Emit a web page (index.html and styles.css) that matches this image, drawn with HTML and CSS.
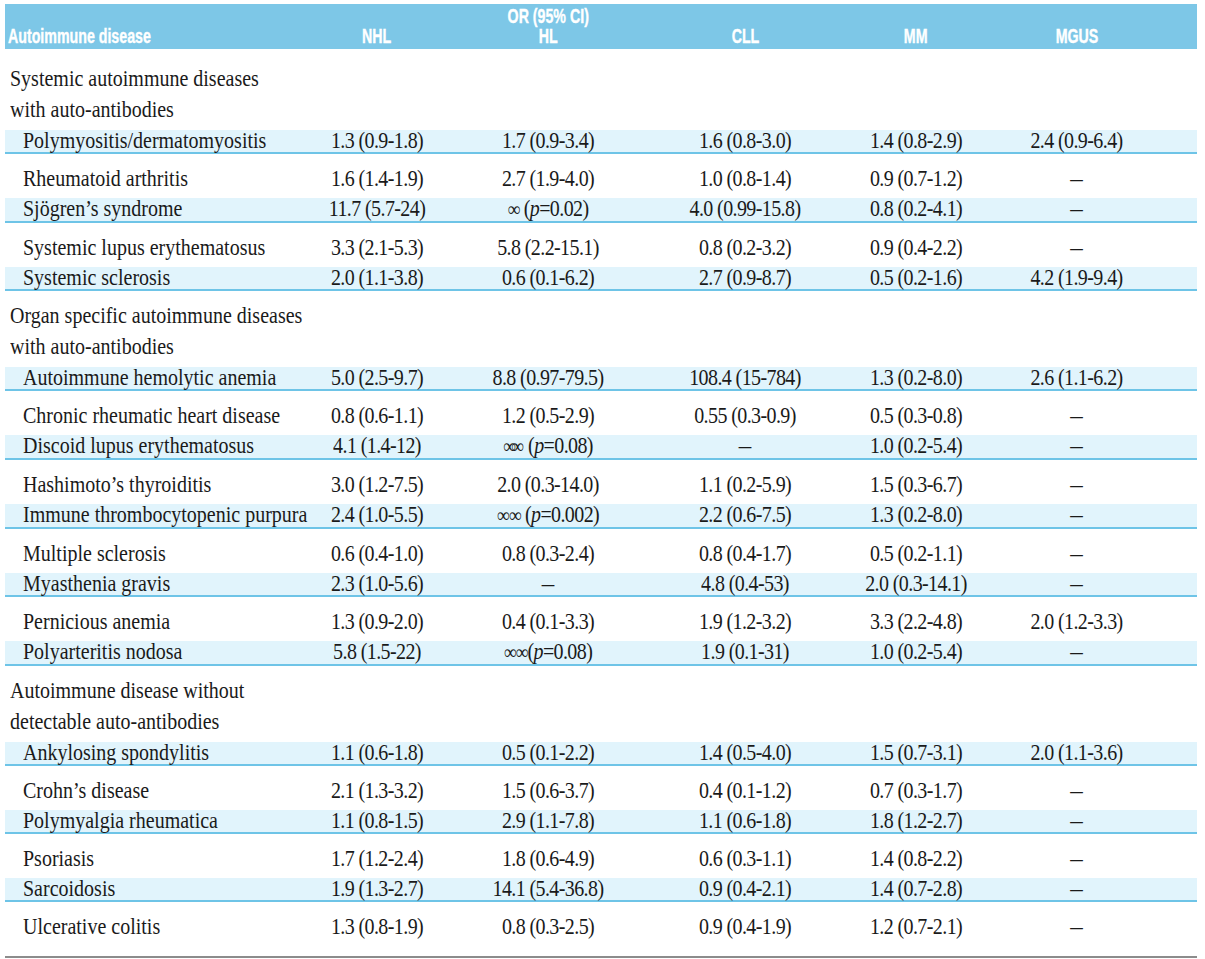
FILE: index.html
```html
<!DOCTYPE html>
<html lang="en">
<head>
<meta charset="utf-8">
<title>Autoimmune disease OR table</title>
<link rel="stylesheet" href="styles.css">
</head>
<body>
<div class="page">
  <div class="tbl">
    <div class="row head">
      <div class="c1"><span class="hx left">Autoimmune disease</span></div>
      <div class="c"><span class="hx">NHL</span></div>
      <div class="c hl"><span class="hx">OR (95% CI)</span><span class="hx">HL</span></div>
      <div class="c"><span class="hx">CLL</span></div>
      <div class="c"><span class="hx">MM</span></div>
      <div class="c"><span class="hx">MGUS</span></div>
    </div>

    <div class="row title first"><div class="c1"><span class="ln">Systemic autoimmune diseases</span><span class="ln">with auto-antibodies</span></div></div>
    <div class="row s"><div class="c1">Polymyositis/dermatomyositis</div><div class="c">1.3 (0.9-1.8)</div><div class="c">1.7 (0.9-3.4)</div><div class="c">1.6 (0.8-3.0)</div><div class="c">1.4 (0.8-2.9)</div><div class="c">2.4 (0.9-6.4)</div></div>
    <div class="row w"><div class="c1">Rheumatoid arthritis</div><div class="c">1.6 (1.4-1.9)</div><div class="c">2.7 (1.9-4.0)</div><div class="c">1.0 (0.8-1.4)</div><div class="c">0.9 (0.7-1.2)</div><div class="c d">–</div></div>
    <div class="row s"><div class="c1">Sjögren’s syndrome</div><div class="c">11.7 (5.7-24)</div><div class="c"><span class="inf">∞</span> (<i>p</i>=0.02)</div><div class="c">4.0 (0.99-15.8)</div><div class="c">0.8 (0.2-4.1)</div><div class="c d">–</div></div>
    <div class="row w"><div class="c1">Systemic lupus erythematosus</div><div class="c">3.3 (2.1-5.3)</div><div class="c">5.8 (2.2-15.1)</div><div class="c">0.8 (0.2-3.2)</div><div class="c">0.9 (0.4-2.2)</div><div class="c d">–</div></div>
    <div class="row s"><div class="c1">Systemic sclerosis</div><div class="c">2.0 (1.1-3.8)</div><div class="c">0.6 (0.1-6.2)</div><div class="c">2.7 (0.9-8.7)</div><div class="c">0.5 (0.2-1.6)</div><div class="c">4.2 (1.9-9.4)</div></div>

    <div class="row title"><div class="c1"><span class="ln">Organ specific autoimmune diseases</span><span class="ln">with auto-antibodies</span></div></div>
    <div class="row s"><div class="c1">Autoimmune hemolytic anemia</div><div class="c">5.0 (2.5-9.7)</div><div class="c">8.8 (0.97-79.5)</div><div class="c">108.4 (15-784)</div><div class="c">1.3 (0.2-8.0)</div><div class="c">2.6 (1.1-6.2)</div></div>
    <div class="row w"><div class="c1">Chronic rheumatic heart disease</div><div class="c">0.8 (0.6-1.1)</div><div class="c">1.2 (0.5-2.9)</div><div class="c">0.55 (0.3-0.9)</div><div class="c">0.5 (0.3-0.8)</div><div class="c d">–</div></div>
    <div class="row s"><div class="c1">Discoid lupus erythematosus</div><div class="c">4.1 (1.4-12)</div><div class="c"><span class="inf tight">∞∞</span> (<i>p</i>=0.08)</div><div class="c d">–</div><div class="c">1.0 (0.2-5.4)</div><div class="c d">–</div></div>
    <div class="row w"><div class="c1">Hashimoto’s thyroiditis</div><div class="c">3.0 (1.2-7.5)</div><div class="c">2.0 (0.3-14.0)</div><div class="c">1.1 (0.2-5.9)</div><div class="c">1.5 (0.3-6.7)</div><div class="c d">–</div></div>
    <div class="row s"><div class="c1">Immune thrombocytopenic purpura</div><div class="c">2.4 (1.0-5.5)</div><div class="c"><span class="inf">∞∞</span> (<i>p</i>=0.002)</div><div class="c">2.2 (0.6-7.5)</div><div class="c">1.3 (0.2-8.0)</div><div class="c d">–</div></div>
    <div class="row w"><div class="c1">Multiple sclerosis</div><div class="c">0.6 (0.4-1.0)</div><div class="c">0.8 (0.3-2.4)</div><div class="c">0.8 (0.4-1.7)</div><div class="c">0.5 (0.2-1.1)</div><div class="c d">–</div></div>
    <div class="row s"><div class="c1">Myasthenia gravis</div><div class="c">2.3 (1.0-5.6)</div><div class="c d">–</div><div class="c">4.8 (0.4-53)</div><div class="c">2.0 (0.3-14.1)</div><div class="c d">–</div></div>
    <div class="row w"><div class="c1">Pernicious anemia</div><div class="c">1.3 (0.9-2.0)</div><div class="c">0.4 (0.1-3.3)</div><div class="c">1.9 (1.2-3.2)</div><div class="c">3.3 (2.2-4.8)</div><div class="c">2.0 (1.2-3.3)</div></div>
    <div class="row s"><div class="c1">Polyarteritis nodosa</div><div class="c">5.8 (1.5-22)</div><div class="c"><span class="inf">∞∞</span>(<i>p</i>=0.08)</div><div class="c">1.9 (0.1-31)</div><div class="c">1.0 (0.2-5.4)</div><div class="c d">–</div></div>

    <div class="row title"><div class="c1"><span class="ln">Autoimmune disease without</span><span class="ln">detectable auto-antibodies</span></div></div>
    <div class="row s"><div class="c1">Ankylosing spondylitis</div><div class="c">1.1 (0.6-1.8)</div><div class="c">0.5 (0.1-2.2)</div><div class="c">1.4 (0.5-4.0)</div><div class="c">1.5 (0.7-3.1)</div><div class="c">2.0 (1.1-3.6)</div></div>
    <div class="row w"><div class="c1">Crohn’s disease</div><div class="c">2.1 (1.3-3.2)</div><div class="c">1.5 (0.6-3.7)</div><div class="c">0.4 (0.1-1.2)</div><div class="c">0.7 (0.3-1.7)</div><div class="c d">–</div></div>
    <div class="row s"><div class="c1">Polymyalgia rheumatica</div><div class="c">1.1 (0.8-1.5)</div><div class="c">2.9 (1.1-7.8)</div><div class="c">1.1 (0.6-1.8)</div><div class="c">1.8 (1.2-2.7)</div><div class="c d">–</div></div>
    <div class="row w"><div class="c1">Psoriasis</div><div class="c">1.7 (1.2-2.4)</div><div class="c">1.8 (0.6-4.9)</div><div class="c">0.6 (0.3-1.1)</div><div class="c">1.4 (0.8-2.2)</div><div class="c d">–</div></div>
    <div class="row s"><div class="c1">Sarcoidosis</div><div class="c">1.9 (1.3-2.7)</div><div class="c">14.1 (5.4-36.8)</div><div class="c">0.9 (0.4-2.1)</div><div class="c">1.4 (0.7-2.8)</div><div class="c d">–</div></div>
    <div class="row w last"><div class="c1">Ulcerative colitis</div><div class="c">1.3 (0.8-1.9)</div><div class="c">0.8 (0.3-2.5)</div><div class="c">0.9 (0.4-1.9)</div><div class="c">1.2 (0.7-2.1)</div><div class="c d">–</div></div>
  </div>
</div>
</body>
</html>
```

FILE: styles.css
```css
html, body {
  margin: 0;
  padding: 0;
  background: #ffffff;
}

.page {
  padding: 4px 8px 0 5px;
}

.tbl {
  width: 1192px;
  border-bottom: 2px solid #8c8c8c;
  font-family: "Liberation Serif", "Times New Roman", serif;
  font-size: 20px;
  color: #1a1a1a;
}

.row {
  display: grid;
  grid-template-columns: 287px 170px 172px 222px 120px 201px;
  line-height: 22px;
}

.c {
  text-align: center;
  white-space: nowrap;
  letter-spacing: -0.6px;
}

.c1 {
  white-space: nowrap;
}

/* taller, condensed-looking serif glyphs */
.s .c1,
.w .c1,
.s .c,
.w .c {
  transform: scaleY(1.12);
  transform-origin: 50% 18px;
}

/* header band */
.head {
  height: 45px;
  box-sizing: border-box;
  background: #7dc7e7;
  color: #ffffff;
  font-family: "Liberation Sans", Arial, sans-serif;
  font-weight: bold;
  font-size: 20px;
  line-height: 20px;
  align-items: end;
  padding-bottom: 3px;
}

.head .c1 {
  padding-left: 3px;
}

.head .c {
  letter-spacing: 0;
}

.hx {
  display: inline-block;
  transform: scaleX(0.71);
  transform-origin: 50% 50%;
  -webkit-text-stroke: 0.4px #ffffff;
}

.hx.left {
  transform-origin: 0 50%;
}

.hl {
  display: flex;
  flex-direction: column;
  align-items: center;
}

/* section titles */
.title {
  line-height: 31px;
  padding: 10px 0 4px;
}

.title.first {
  padding-top: 15px;
}

.title .c1 {
  grid-column: 1 / 4;
  padding-left: 5px;
}

.ln {
  display: block;
  transform: scaleY(1.12);
  transform-origin: 0 22px;
}

/* data rows */
.s .c1,
.w .c1 {
  padding-left: 18px;
}

.s {
  background: #e1f4fc;
  border-bottom: 2px solid #6ec4e7;
}

.w {
  padding: 14px 0 8px;
}

.w.last {
  padding-bottom: 18px;
}

.d {
  letter-spacing: 0;
  font-size: 25px;
}

.inf {
  font-size: 18px;
  letter-spacing: -1px;
}

.inf.tight {
  letter-spacing: -5px;
  margin-right: 5px;
}

i {
  font-style: italic;
}
```
